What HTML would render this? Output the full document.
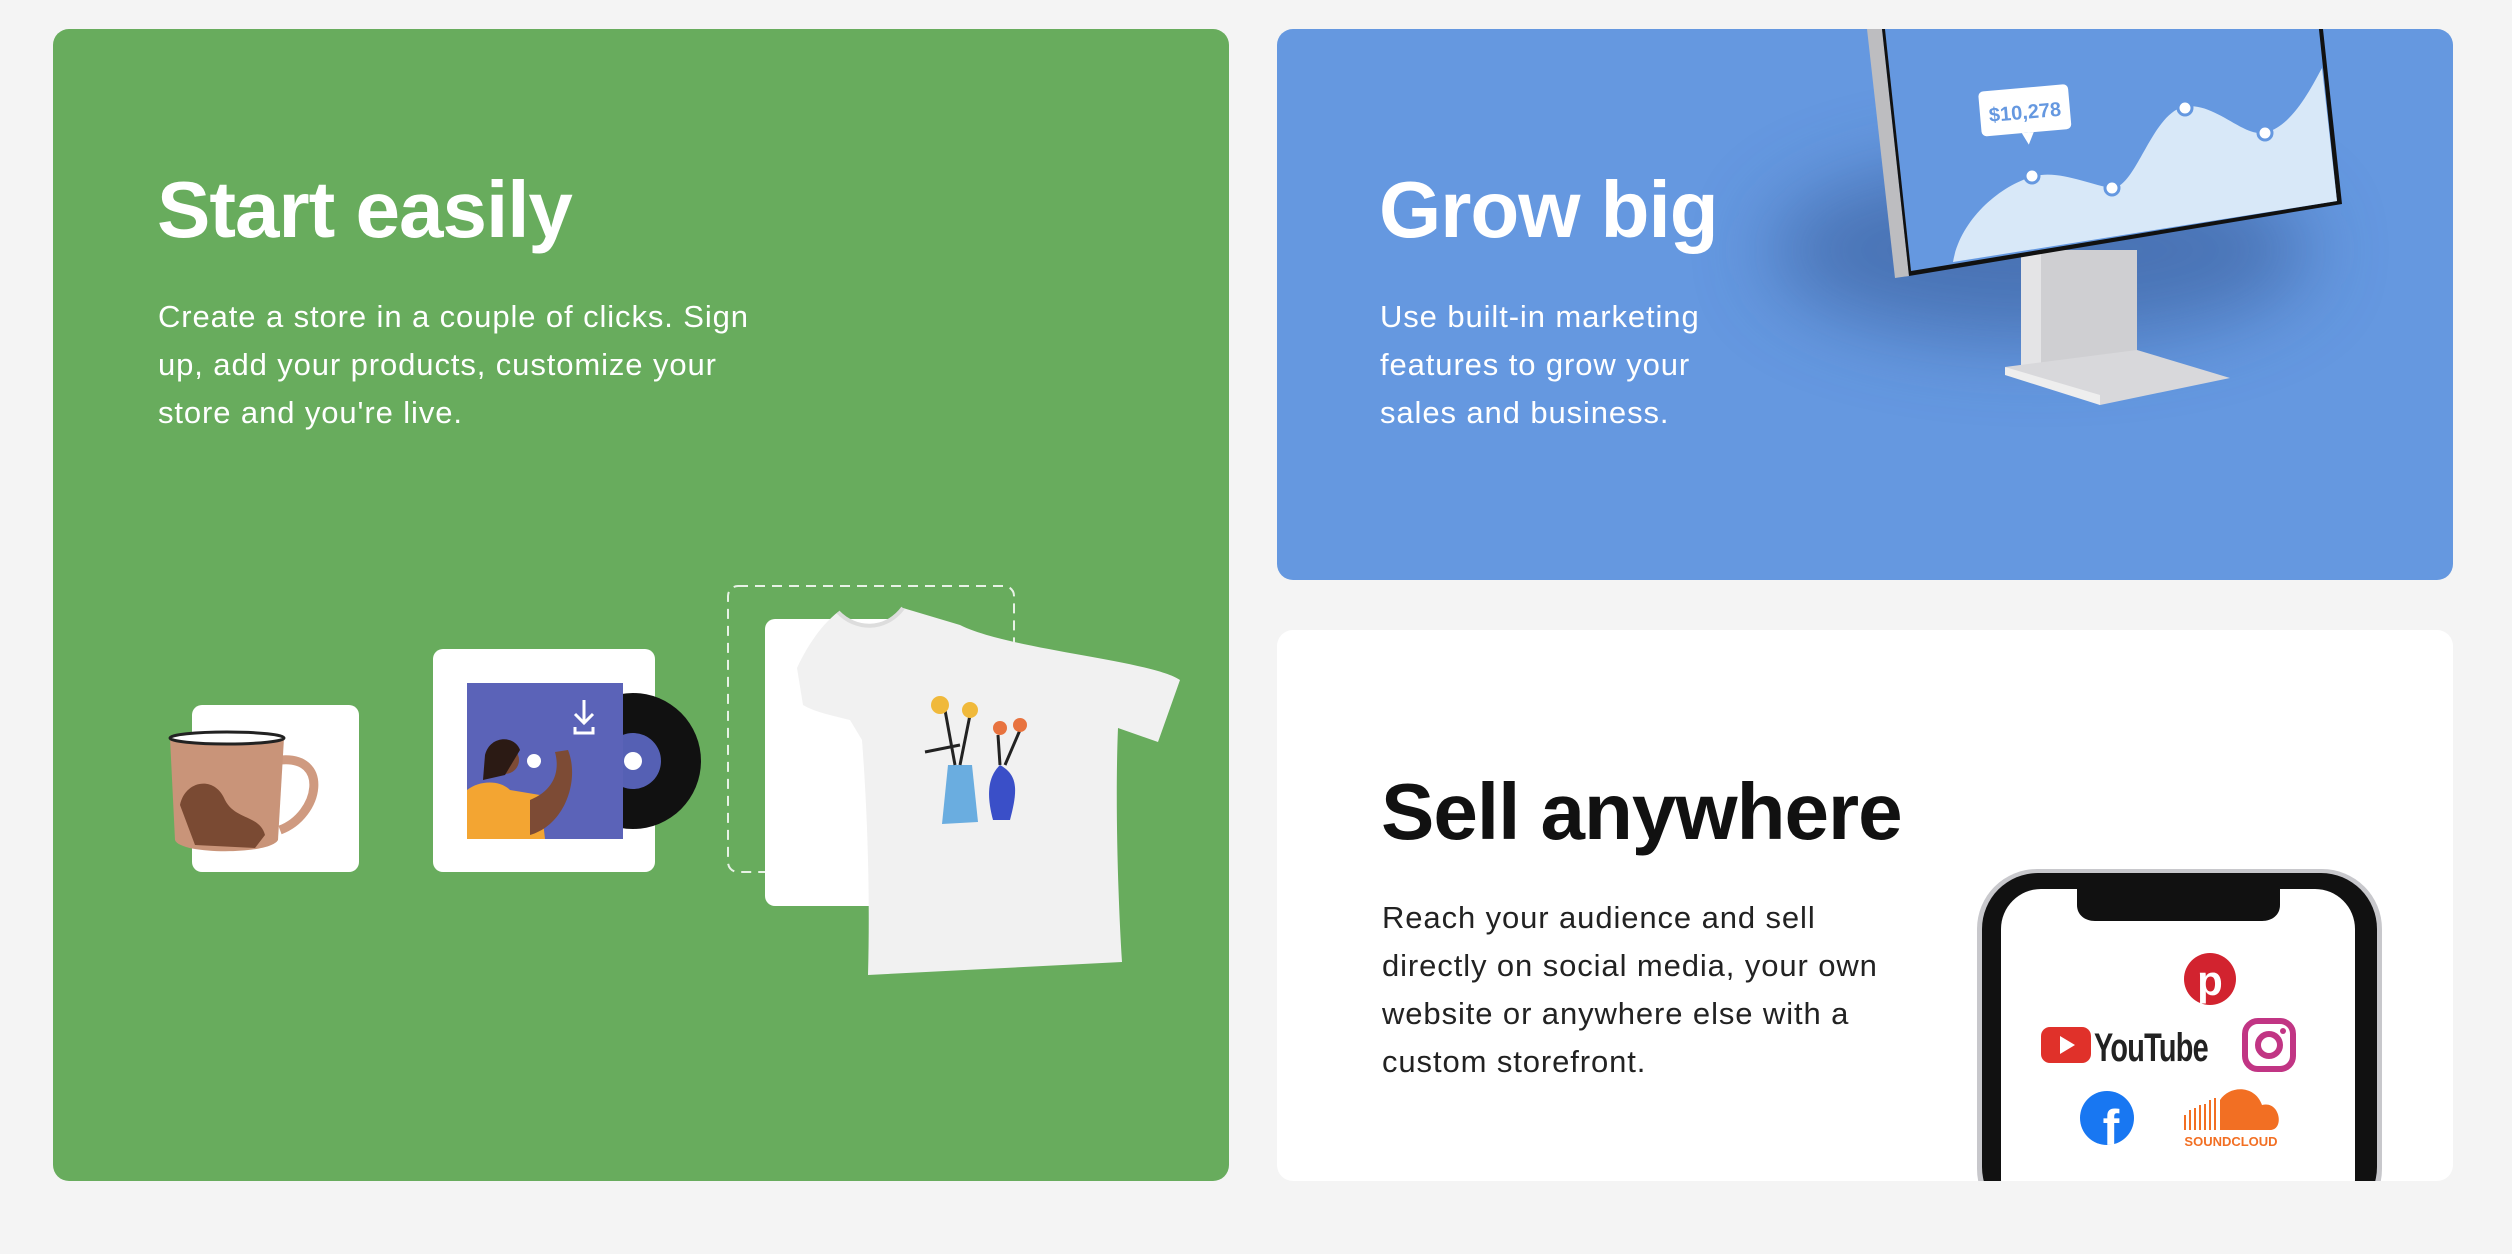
<!DOCTYPE html>
<html><head><meta charset="utf-8"><style>
*{margin:0;padding:0;box-sizing:border-box}
body{width:2512px;height:1254px;background:#f4f4f4;position:relative;overflow:hidden;font-family:"Liberation Sans",sans-serif}
.card{position:absolute;border-radius:16px;overflow:hidden}
h2{position:absolute;font-size:80px;font-weight:bold;letter-spacing:-1px;line-height:1}
p{position:absolute;font-size:31px;letter-spacing:0.9px;line-height:48px;white-space:nowrap}
svg{position:absolute;left:0;top:0}
</style></head><body>
<div class="card" style="left:53px;top:29px;width:1176px;height:1152px;background:#68ac5d"></div>
<div class="card" style="left:1277px;top:29px;width:1176px;height:551px;background:#6598e0"></div>
<div class="card" style="left:1277px;top:630px;width:1176px;height:551px;background:#fff"></div>

<svg width="2512" height="1254" viewBox="0 0 2512 1254">
<defs>
<filter id="bl" x="-50%" y="-50%" width="200%" height="200%"><feGaussianBlur stdDeviation="40"/></filter>
<clipPath id="bc"><rect x="1277" y="29" width="1176" height="551" rx="16"/></clipPath>
<clipPath id="wc"><rect x="1277" y="630" width="1176" height="551" rx="16"/></clipPath>
</defs>
<g clip-path="url(#bc)">
<ellipse cx="2040" cy="250" rx="270" ry="90" fill="#2d4f8a" opacity="0.5" filter="url(#bl)"/>
<rect x="2021" y="250" width="116" height="115" fill="#cfcfd2"/>
<rect x="2021" y="250" width="20" height="115" fill="#e4e4e6"/>
<polygon points="2005,367 2137,350 2230,378 2100,405" fill="#d8d8db"/>
<polygon points="2005,367 2100,395 2100,405 2005,375" fill="#eee"/>
<polygon points="1866,20 1881,20 1909,276 1895,278" fill="#bdbdc0"/>
<polygon points="1881,20 2322,20 2342,204 1909,276" fill="#111"/>
<polygon points="1884,20 2318,20 2337,201 1911,271" fill="#6598e0"/>
<path d="M1953,262 C1960,220 2000,185 2035,176 C2060,170 2090,185 2112,188 C2135,188 2150,120 2180,108 C2210,98 2240,135 2262,133 C2290,130 2310,90 2322,68 L2337,201 L1953,262Z" fill="#d8e8f8"/>
<g fill="#fff" stroke="#6598e0" stroke-width="3"><circle cx="2032" cy="176" r="7"/><circle cx="2112" cy="188" r="7"/><circle cx="2185" cy="108" r="7"/><circle cx="2265" cy="133" r="7"/></g>
<g transform="rotate(-5 2080 110)"><rect x="1980" y="83" width="90" height="45" rx="5" fill="#fff"/><polygon points="2020,128 2032,128 2026,140" fill="#fff"/>
<text x="2025" y="114" font-size="20" font-weight="bold" fill="#6598e0" text-anchor="middle">$10,278</text></g>
</g>
<rect x="192" y="705" width="167" height="167" rx="10" fill="#fff"/>
<rect x="433" y="649" width="222" height="223" rx="10" fill="#fff"/>
<rect x="728" y="586" width="286" height="286" rx="10" fill="none" stroke="#e8f2e6" stroke-width="2" stroke-dasharray="10 7"/>
<rect x="765" y="619" width="170" height="287" rx="10" fill="#fff"/>
<path d="M280,760 C330,755 320,815 280,830" fill="none" stroke="#cf9a80" stroke-width="9"/>
<path d="M170,738 L284,738 L278,840 C270,855 180,855 175,840Z" fill="#c99479"/>
<ellipse cx="227" cy="738" rx="57" ry="6" fill="#fff" stroke="#222" stroke-width="3"/>
<path d="M180,805 C185,780 215,775 225,800 C235,820 260,815 265,835 L255,848 L195,845Z" fill="#7a4a33"/>
<circle cx="633" cy="761" r="68" fill="#111"/>
<circle cx="633" cy="761" r="28" fill="#5560b4"/>
<circle cx="633" cy="761" r="9" fill="#fff"/>
<rect x="467" y="683" width="156" height="156" fill="#5b63b8"/>
<path d="M467,790 C480,780 500,780 510,790 L540,795 L545,839 L467,839Z" fill="#f3a532"/>
<path d="M530,800 C555,790 560,770 555,752 L568,750 C580,780 565,825 530,835Z" fill="#7d4b35"/>
<circle cx="505" cy="760" r="14" fill="#7d4b35"/><path d="M485,755 C490,735 515,735 520,750 L505,775 L483,780Z" fill="#2b1a14"/>
<circle cx="534" cy="761" r="7" fill="#fff"/>
<path d="M584,700 V722 M575,714 L584,723 L593,714 M575,727 V733 H593 V727" fill="none" stroke="#fff" stroke-width="3"/>
<path d="M838,612 C855,630 885,632 903,608 L960,625 C1010,650 1150,660 1180,680 L1158,742 L1118,728 C1115,800 1118,900 1122,962 L868,975 C870,900 868,820 862,740 L850,720 C830,715 815,712 803,705 L797,668 C810,640 825,622 838,612Z" fill="#f1f1f1"/>
<path d="M838,612 C855,630 885,632 903,608" fill="none" stroke="#ddd" stroke-width="4"/>
<polygon points="948,765 972,765 978,822 942,824" fill="#6aade0"/>
<path d="M1000,765 C1018,775 1018,790 1010,820 L993,820 C985,790 990,775 1000,765Z" fill="#3a4fc8"/>
<path d="M955,765 L945,710 M960,765 L970,715 M1000,765 L998,735 M1005,765 L1020,730 M925,752 L960,745" stroke="#222" stroke-width="3"/>
<g fill="#f0b93b"><circle cx="940" cy="705" r="9"/><circle cx="970" cy="710" r="8"/></g>
<g fill="#e8733f"><circle cx="1000" cy="728" r="7"/><circle cx="1020" cy="725" r="7"/></g>
<g clip-path="url(#wc)">
<rect x="1977" y="869" width="405" height="360" rx="60" fill="#c8c8cc"/>
<rect x="1982" y="873" width="395" height="350" rx="56" fill="#111"/>
<rect x="2001" y="889" width="354" height="330" rx="40" fill="#fff"/>
<path d="M2077,885 H2280 V905 C2280,915 2272,921 2262,921 H2095 C2085,921 2077,915 2077,905Z" fill="#111"/>
</g>
<circle cx="2210" cy="979" r="26" fill="#d2232f"/>
<text x="2210" y="995" font-size="42" font-weight="bold" fill="#fff" text-anchor="middle">p</text>
<rect x="2041" y="1027" width="50" height="36" rx="9" fill="#e0312a"/>
<polygon points="2060,1036 2060,1054 2075,1045" fill="#fff"/>
<text x="2094" y="1061" font-size="40" font-weight="bold" fill="#222" textLength="114" lengthAdjust="spacingAndGlyphs" letter-spacing="-1">YouTube</text>
<rect x="2245" y="1021" width="48" height="48" rx="13" fill="none" stroke="#c13584" stroke-width="6"/>
<circle cx="2269" cy="1045" r="11" fill="none" stroke="#c13584" stroke-width="6"/><circle cx="2283" cy="1031" r="3" fill="#c13584"/>
<circle cx="2107" cy="1118" r="27" fill="#1877f2"/>
<text x="2111" y="1145" font-size="50" font-weight="bold" fill="#fff" text-anchor="middle">f</text>
<path d="M2220,1130 V1100 C2230,1085 2255,1085 2262,1105 C2280,1100 2285,1130 2270,1130Z" fill="#f26f23"/>
<g stroke="#f26f23" stroke-width="2"><path d="M2185,1130V1115M2190,1130V1110M2195,1130V1108M2200,1130V1105M2205,1130V1104M2210,1130V1100M2215,1130V1098"/></g>
<text x="2231" y="1146" font-size="13" font-weight="bold" fill="#f26f23" text-anchor="middle">SOUNDCLOUD</text>
</svg>

<h2 style="left:157px;top:170px;color:#fff">Start easily</h2>
<p style="left:158px;top:293px;color:#fff">Create a store in a couple of clicks. Sign<br>up, add your products, customize your<br>store and you're live.</p>
<h2 style="left:1379px;top:170px;color:#fff">Grow big</h2>
<p style="left:1380px;top:293px;color:#fff">Use built-in marketing<br>features to grow your<br>sales and business.</p>
<h2 style="left:1381px;top:772px;color:#111">Sell anywhere</h2>
<p style="left:1382px;top:894px;color:#222">Reach your audience and sell<br>directly on social media, your own<br>website or anywhere else with a<br>custom storefront.</p>
</body></html>
